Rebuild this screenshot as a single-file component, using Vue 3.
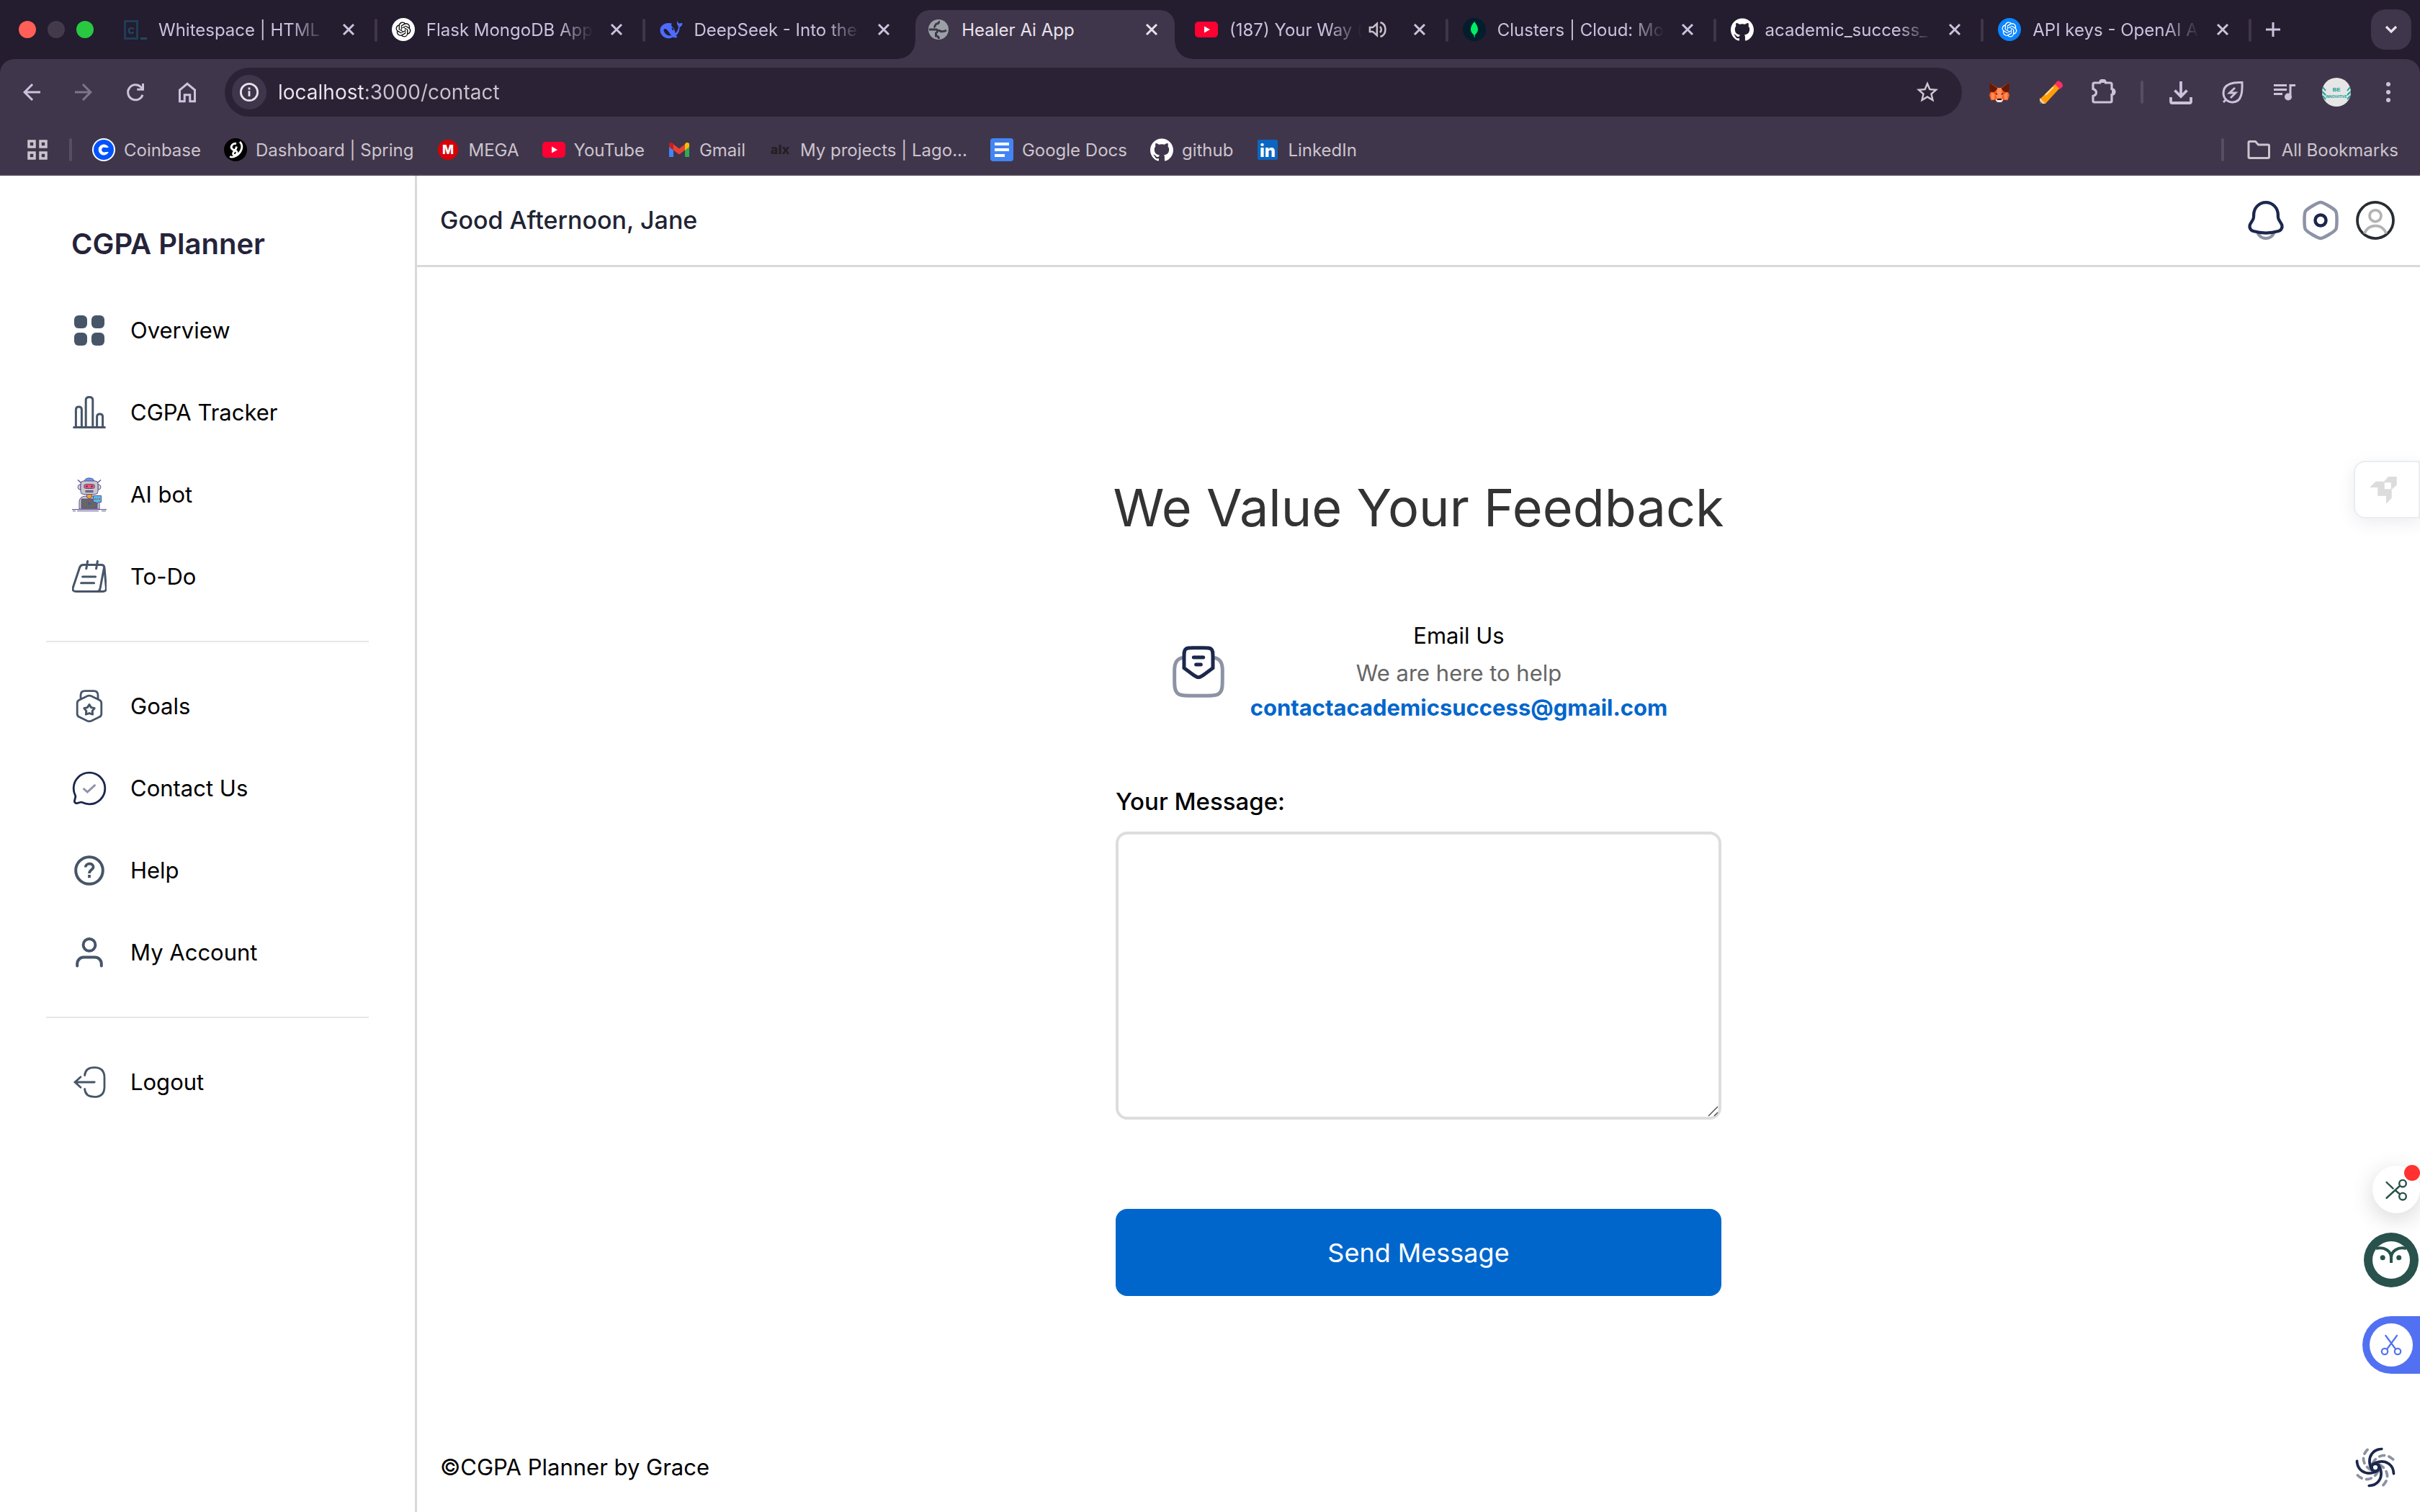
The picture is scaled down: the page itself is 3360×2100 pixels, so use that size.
<script setup>
import { ref } from 'vue'

const address = ref('localhost:3000/contact')
const message = ref('')

const knot = 'M22.2819 9.8211a5.9847 5.9847 0 0 0-.5157-4.9108 6.0462 6.0462 0 0 0-6.5098-2.9A6.0651 6.0651 0 0 0 4.9807 4.1818a5.9847 5.9847 0 0 0-3.9977 2.9 6.0462 6.0462 0 0 0 .7427 7.0966 5.98 5.98 0 0 0 .511 4.9107 6.051 6.051 0 0 0 6.5146 2.9001A5.9847 5.9847 0 0 0 13.2599 24a6.0557 6.0557 0 0 0 5.7718-4.2058 5.9894 5.9894 0 0 0 3.9977-2.9001 6.0557 6.0557 0 0 0-.7475-7.0729zm-9.022 12.6081a4.4755 4.4755 0 0 1-2.8764-1.0408l.1419-.0804 4.7783-2.7582a.7948.7948 0 0 0 .3927-.6813v-6.7369l2.02 1.1686a.071.071 0 0 1 .038.052v5.5826a4.504 4.504 0 0 1-4.4945 4.4944zm-9.6607-4.1254a4.4708 4.4708 0 0 1-.5346-3.0137l.142.0852 4.783 2.7582a.7712.7712 0 0 0 .7806 0l5.8428-3.3685v2.3324a.0804.0804 0 0 1-.0332.0615L9.74 19.9502a4.4992 4.4992 0 0 1-6.1408-1.6464zM2.3408 7.8956a4.485 4.485 0 0 1 2.3655-1.9728V11.6a.7664.7664 0 0 0 .3879.6765l5.8144 3.3543-2.0201 1.1685a.0757.0757 0 0 1-.071 0l-4.8303-2.7865A4.504 4.504 0 0 1 2.3408 7.872zm16.5963 3.8558L13.1038 8.364 15.1192 7.2a.0757.0757 0 0 1 .071 0l4.8303 2.7913a4.4944 4.4944 0 0 1-.6765 8.1042v-5.6772a.79.79 0 0 0-.407-.667zm2.0107-3.0231l-.142-.0852-4.7735-2.7818a.7759.7759 0 0 0-.7854 0L9.409 9.2297V6.8974a.0662.0662 0 0 1 .0284-.0615l4.8303-2.7866a4.4992 4.4992 0 0 1 6.6802 4.66zM8.3065 12.863l-2.02-1.1638a.0804.0804 0 0 1-.038-.0567V6.0742a4.4992 4.4992 0 0 1 7.3757-3.4537l-.142.0805L8.704 5.459a.7948.7948 0 0 0-.3927.6813zm1.0976-2.3654l2.602-1.4998 2.6069 1.4998v2.9994l-2.5974 1.4997-2.6067-1.4997Z'
const octocat = '<path fill="#fff" d="M12 .297c-6.63 0-12 5.373-12 12 0 5.303 3.438 9.8 8.205 11.385.6.113.82-.258.82-.577 0-.285-.01-1.04-.015-2.04-3.338.724-4.042-1.61-4.042-1.61C4.422 18.07 3.633 17.7 3.633 17.7c-1.087-.744.084-.729.084-.729 1.205.084 1.838 1.236 1.838 1.236 1.07 1.835 2.809 1.305 3.495.998.108-.776.417-1.305.76-1.605-2.665-.3-5.466-1.332-5.466-5.93 0-1.31.465-2.38 1.235-3.22-.135-.303-.54-1.523.105-3.176 0 0 1.005-.322 3.3 1.23.96-.267 1.98-.399 3-.405 1.02.006 2.04.138 3 .405 2.28-1.552 3.285-1.23 3.285-1.23.645 1.653.24 2.873.12 3.176.765.84 1.23 1.91 1.23 3.22 0 4.61-2.805 5.625-5.475 5.92.42.36.81 1.096.81 2.22 0 1.606-.015 2.896-.015 3.286 0 .315.21.69.825.57C20.565 22.092 24 17.592 24 12.297c0-6.627-5.373-12-12-12"/>'
const youtube = '<rect y="5" width="32" height="22" rx="5" fill="#ff0033"/><path d="M13 11.500l8 4.500-8 4.500z" fill="#fff"/>'

// Each entry is [viewBox size, inner markup].
const icons = {
  code: [32, '<rect x="1.500" y="4.500" width="17" height="24" fill="none" stroke="#1f3d56" stroke-width="3"/><text x="10" y="21.500" text-anchor="middle" font-family="Liberation Mono, monospace" font-weight="700" font-size="17" fill="#1f4a63">c</text><path d="M23 28.500h9" stroke="#1f4a63" stroke-width="3"/>'],
  gpt: [32, `<circle cx="16" cy="16" r="16" fill="#fff"/><path transform="translate(5.500 5.500) scale(.875)" d="${knot}" fill="#111"/>`],
  openai: [32, `<circle cx="16" cy="16" r="16" fill="#0a84ff"/><path transform="translate(5.500 5.500) scale(.875)" d="${knot}" fill="#fff"/>`],
  deepseek: [32, '<path fill="#4d6bfe" d="M31.500 7.200c-2.200-.7-3.400.6-4.800.2-1.100-.4-1.500-1.600-2.100-3.400-.9 2-1 4.200.3 5.900.9 1.200 1.100 2.200.9 3.700-.5 3.500-2.200 6.300-4 7.400-.6-3.900-2.600-7.300-5.200-9.700-1.200-1.100-.6-2.800 1-3.300-4.800-1.800-11.700-1-15.300 3.600C-.9 15.700.3 22.400 5.200 26c4.600 3.300 10 2.600 13 .5 1.800 1.100 4.500 1.200 6.600 0-1-.6-1.800-1-2.100-1.900 3.500-3.100 5.100-7.400 4.900-12 2.400-.6 3.900-2.500 3.900-5.400zM16.200 24.200c-4.600 1-9-1.500-10.700-6.700-.3-1 .4-2.700 2-2.500 3 .4 5.300 5.300 8.700 9.200zM17 13.200c1.700.6 2.200 2.400 1.800 4.200-1.300-.4-2.700-2.200-1.800-4.200z"/>'],
  globe: [32, '<circle cx="16" cy="16" r="14" fill="#9aa0a6"/><path d="M16 4.500c1.500 2-.5 3.500-2.500 3.500s-1.500 4-4 5M3 16h10c3 1 1.500 4-.5 5v4c2 0 4 1 4 4M17 16c0 4 7 3 10 1" fill="none" stroke="#40364b" stroke-width="3"/>'],
  youtube: [32, youtube],
  mongo: [32, '<circle cx="16" cy="16" r="16" fill="#001e2b"/><path d="M16 5c-3 4-5 6.500-5 10.500S13.500 22 15.400 23.500l.3 3.500h.8l.3-3.500C18.500 22 21 19.500 21 15.500S18.500 8.500 16 5z" fill="#00ed64"/>'],
  github: [24, octocat],
  close: [24, '<path d="M5 5l14 14M19 5L5 19" stroke="currentColor" stroke-width="3" fill="none"/>'],
  sound: [24, '<path d="M2.500 9.500h3.500l5-4.500v14l-5-4.500H2.500z" fill="none" stroke="currentColor" stroke-width="2.200"/><path d="M14.500 8.500a4.500 4.500 0 0 1 0 7M15 3.500c8 2.500 8 14.500 0 17" fill="none" stroke="currentColor" stroke-width="2.200"/>'],
  plus: [24, '<path d="M12 2v20M2 12h20" stroke="currentColor" stroke-width="3"/>'],
  chevron: [24, '<path d="M5 8l7 7 7-7" fill="none" stroke="currentColor" stroke-width="3.200"/>'],
  back: [24, '<path fill="currentColor" d="M20 11H7.830l5.590-5.590L12 4l-8 8 8 8 1.410-1.410L7.830 13H20v-2z"/>'],
  forward: [24, '<path fill="currentColor" d="M4 11h12.170l-5.590-5.590L12 4l8 8-8 8-1.410-1.410L16.170 13H4v-2z"/>'],
  reload: [24, '<path d="M18.700 14.500A7 7 0 1 1 17 7.200l2 2M19 4v5.500h-5.500" fill="none" stroke="currentColor" stroke-width="2"/>'],
  home: [24, '<path d="M5 10v10.500h4.500v-6h5v6H19V10l-7-5.800z" fill="none" stroke="currentColor" stroke-width="2"/>'],
  info: [24, '<circle cx="12" cy="12" r="10" fill="none" stroke="currentColor" stroke-width="2.400"/><path d="M12 10.500V17M12 6.500v2.400" stroke="currentColor" stroke-width="2.400"/>'],
  star: [24, '<path fill="currentColor" d="M22 9.240l-7.190-.62L12 2 9.190 8.630 2 9.240l5.460 4.730L5.820 21 12 17.270 18.180 21l-1.630-7.030L22 9.240zM12 15.400l-3.760 2.270 1-4.280-3.320-2.880 4.380-.38L12 6.100l1.710 4.040 4.380.38-3.320 2.880 1 4.280L12 15.400z"/>'],
  fox: [32, '<path d="M1 1l12 8h6L31 1l-1 14 2 6-3 8-6-1-3 4h-8l-3-4-6 1-3-8 2-6z" fill="#ff5c16"/><path d="M1 1l12 9-4 5-7 2C0 10 0 5 1 1zM31 1l-12 9 4 5 7 2c2-6 2-11 1-16z" fill="#661800"/><path d="M13 9h6l2 12-2 6h-6l-2-6z" fill="#ff8d5d"/><path d="M3 15l6 5-1 8-5-1zM29 15l-6 5 1 8 5-1z" fill="#ff8d5d"/><path d="M10 28l3-2h6l3 2-3 4h-6z" fill="#e7ebf6"/><path d="M13 26h6l1 2.500h-8zM9 17l4 1.500-.5 2zM23 17l-4 1.500.5 2z" fill="#331000"/>'],
  pencil: [32, '<path d="M0 26L22 4l6 6L8 32z" fill="#ff9d0a"/><path d="M21 5l3-4c3-2 9 3 8 7l-4 4z" fill="#ff2e63"/><path d="M8 20L19 9" stroke="#ffe0a8" stroke-width="1.800"/><path d="M0 24l8 8H0z" fill="#ffd0a0"/><path d="M0 28l4 4H0z" fill="#5d5d66"/>'],
  puzzle: [36, '<path d="M6 5h7.500a4 4 0 0 1 8 0H28q2 0 2 2v6.500a4 4 0 0 1 0 8V30q0 2-2 2H6q-2 0-2-2v-6.500c6-2 6-8 0-10V7q0-2 2-2z" fill="none" stroke="currentColor" stroke-width="3.200"/><path d="M13 5a4.500 4.500 0 0 1 9 0zM30 13.500a4.500 4.500 0 0 1 0 9z" fill="currentColor"/>'],
  download: [36, '<path d="M18 3v22M9.500 15.500L18 24l8.500-8.500M4 25v6q0 2 2 2h24q2 0 2-2v-6" fill="none" stroke="currentColor" stroke-width="3.800"/>'],
  leaf: [36, '<path d="M31 4.500C20 4 5 6 5 19c0 8 6 13 13 13 13 0 13.500-16 13-27.500zM9.500 27.500L5 32" fill="none" stroke="currentColor" stroke-width="3"/><path d="M21 12l-7.500 7h8.500L15 26" fill="none" stroke="currentColor" stroke-width="2.800"/>'],
  music: [36, '<path d="M3 8.500h18M3 14.500h18M3 20.500h12M26 22V8.500h7" fill="none" stroke="currentColor" stroke-width="3"/><circle cx="23" cy="24.500" r="5" fill="currentColor"/>'],
  avatar: [40, '<circle cx="20" cy="20" r="20" fill="#e6e6e6"/><g fill="#18a095" font-family="Liberation Sans Narrow, Liberation Sans, sans-serif" font-weight="700" font-size="8" text-anchor="middle"><text x="20" y="19">BE</text><text x="20" y="28" font-size="5">INNOVATIVE</text></g><path d="M1 13l4 5M0 19l5 5M1 25l4 5M39 13l-4 5M40 19l-5 5M39 25l-4 5" stroke="#18a095" stroke-width="2"/>'],
  kebab: [36, '<g fill="currentColor"><circle cx="18" cy="7" r="3"/><circle cx="18" cy="18" r="3"/><circle cx="18" cy="29" r="3"/></g>'],
  grid: [28, '<path d="M2 2h8v8H2zM18 2h8v8h-8zM2 18h8v8H2zM18 18h8v8h-8z" fill="none" stroke="currentColor" stroke-width="3.500"/>'],
  coinbase: [32, '<circle cx="16" cy="16" r="16" fill="#fff"/><circle cx="16" cy="16" r="14" fill="#0052ff"/><path d="M23 13a7.500 7.500 0 1 0 0 6h-4.500a3.500 3.500 0 1 1 0-6z" fill="#fff"/>'],
  spring: [32, '<circle cx="16" cy="16" r="16" fill="#000"/><path d="M22 5c5 5 3 12-2 17-3 3-8 5-12 3.500M17 7.500c-6-1-9 5.500-5 8s6.500 1.500 6 5-5.500 4-5.500 1 4.500-5 5-10" fill="none" stroke="#fff" stroke-width="2.800"/>'],
  mega: [32, '<circle cx="16" cy="16" r="14" fill="#d90007"/><text x="16" y="22" text-anchor="middle" font-family="Inter, sans-serif" font-weight="800" font-size="17" fill="#fff">M</text>'],
  gmail: [32, '<path d="M2 8v18h6V13z" fill="#4285f4"/><path d="M30 8v18h-6V13z" fill="#34a853"/><path d="M24 8l6-1v5l-6 4.500z" fill="#fbbc04"/><path d="M2 7l6 1v8.500L2 12z" fill="#c5221f"/><path d="M5 6l11 8.500L27 6l-3 10.500-8 6-8-6z" fill="#ea4335"/><path d="M24 8c2-3 6-2.500 6 1v3l-6 4.500z" fill="#fbbc04"/><path d="M8 8C6 5 2 5.500 2 9v3l6 4.500z" fill="#c5221f"/>'],
  alx: [32, '<text x="16" y="22" text-anchor="middle" font-family="Inter, sans-serif" font-weight="800" font-size="18" fill="#231f24">alx</text>'],
  docs: [32, '<rect width="32" height="32" rx="4" fill="#4285f4"/><path d="M6 8h20M6 16h20M6 24h14" stroke="#fff" stroke-width="4"/>'],
  linkedin: [32, '<rect x="2" y="2" width="28" height="28" rx="2" fill="#0a66c2"/><text x="16" y="26" text-anchor="middle" font-family="Inter, sans-serif" font-weight="800" font-size="24" fill="#fff">in</text>'],
  folder: [32, '<path d="M3.500 4.500h8l4 4.500H29q1.500 0 1.500 1.500V26q0 1.500-1.500 1.500H3.500Q2 27.500 2 26V6q0-1.500 1.500-1.500z" fill="none" stroke="currentColor" stroke-width="3"/>'],

  overview: [48, '<g fill="#475569"><rect x="3" y="3" width="18" height="18" rx="6"/><rect x="27" y="3" width="18" height="18" rx="6"/><rect x="3" y="27" width="18" height="18" rx="6"/><rect x="27" y="27" width="18" height="18" rx="6"/></g>'],
  chart: [24, '<path d="M1.300 22.300h21.400M2.700 22V10q0-2 2-2t2 2v12M9.600 22V3.300q0-2 2.400-2t2.400 2V22M17.300 22v-7q0-2 2-2t2 2v7" fill="none" stroke="#475569" stroke-width="1.500" stroke-linecap="round"/>'],
  robot: [48, '<g stroke="#5a4f8c" stroke-width="1"><path d="M10 44V34q0-7 8-8h12q8 1 8 8v10z" fill="#c9c9cf"/><path d="M12.500 7.500L8 3.500M35.500 7.500L40 3.500" fill="none" stroke-width="1.400"/><path d="M17 5.500q1-4.500 7-4.500t7 4.500z" fill="#5b9df0"/><path d="M12 9.500q-4 1-4 4t4 4zM36 9.500q4 1 4 4t-4 4z" fill="#d9d9de"/><rect x="12" y="5" width="24" height="18.500" rx="4" fill="#c8c8cc"/><rect x="16.500" y="9.500" width="15" height="6" rx="3" fill="#f4566e"/><rect x="19" y="18.500" width="10" height="2" fill="#777"/><path d="M20.500 23.500h7v4L24 30l-3.500-2.500z" fill="#f7a11a"/><path d="M13 43V30h22v13z" fill="#666"/><path d="M29.500 25.500h11v9h-4L35 37l-1.500-2.500h-4z" fill="#55bdf0"/><path d="M0 44.500h48M1 46.700h4M7 46.700h30M41 46.700h6" fill="none"/></g><circle cx="20.500" cy="12.500" r="1.200" fill="#3b2a7a"/><circle cx="27.500" cy="12.500" r="1.200" fill="#3b2a7a"/><circle cx="24" cy="36.500" r="1.800" fill="#5a4f8c"/><path d="M31 30h2M34 30h2M37 30h2" stroke="#a0522d" stroke-width="1.600"/>'],
  todo: [24, '<path d="M7.800 3.700h12.400q2.200 0 2.300 2.200l1.200 13.900q.2 2.500-2.300 2.500H3q-3.100 0-2.300-2.900L5.300 5.600q.6-1.900 2.500-1.900zM22.300 5.500l-2.700 14.200q-.4 2.600-2.600 2.600M10.800 1.200l-.9 5.200M17.700 1.200l-.9 5.200M7.300 12h9M6.300 16.400h9" fill="none" stroke="#475569" stroke-width="1.500" stroke-linecap="round"/>'],
  goals: [24, '<path d="M6 7.200V4.300q0-3 3-3h6q3 0 3 3v2.900M10.600 4.900q1.400-.6 2.800 0l5.600 2.700q1.400.7 1.400 2.200v7.400q0 1.500-1.400 2.200l-5.600 2.700q-1.400.6-2.800 0L5 19.400q-1.400-.7-1.400-2.200V9.800q0-1.500 1.400-2.200z" fill="none" stroke="#475569" stroke-width="1.400"/><path d="M12 10.800l1.300 2 2.300.5-1.500 1.900.2 2.400-2.300-.8-2.300.8.200-2.400-1.500-1.900 2.300-.5z" fill="none" stroke="#475569" stroke-width="1.500" stroke-linejoin="round"/>'],
  contact: [22, '<g transform="translate(-1 -1)" fill="none" stroke="#1c274c" stroke-width="1.300"><path d="M12 22C17.523 22 22 17.523 22 12C22 6.477 17.523 2 12 2C6.477 2 2 6.477 2 12C2 13.600 2.376 15.112 3.043 16.453C3.221 16.809 3.280 17.216 3.177 17.601L2.582 19.827C2.323 20.793 3.207 21.677 4.173 21.419L6.399 20.823C6.784 20.720 7.191 20.779 7.548 20.957C8.888 21.624 10.400 22 12 22Z"/><path opacity=".5" d="M8.500 12.300l2.300 2 4.700-4.300" stroke-linecap="round"/></g>'],
  help: [24, '<circle cx="12" cy="12" r="9.400" fill="none" stroke="#475569" stroke-width="2"/><path d="M9.400 9.800c0-3.200 5.400-3.300 5.400-.2 0 2-2.800 1.900-2.800 4.400M12 15v2.100" fill="none" stroke="#475569" stroke-width="1.900"/>'],
  account: [24, '<circle cx="12" cy="6.700" r="4.200" fill="none" stroke="#475569" stroke-width="2"/><path d="M3.600 21.300v-1.500a4.500 4.500 0 0 1 4.500-4.500h7.800a4.500 4.500 0 0 1 4.500 4.500v1.500" fill="none" stroke="#475569" stroke-width="2" stroke-linecap="round"/>'],
  logout: [24, '<path d="M15.600 12H2M6 8.400L2 12l4 3.600M8.800 7.300q.4-5.500 6.700-5.500 7 0 7 7v6.400q0 7-7 7-6.300 0-6.700-5.500" fill="none" stroke="#475569" stroke-width="1.400" stroke-linecap="round"/>'],

  bell: [24, '<g fill="none" stroke="#1c274c" stroke-width="1.700"><path opacity=".5" d="M7.500 19C8.155 20.748 9.922 22 12 22C14.078 22 15.845 20.748 16.500 19"/><path d="M18.749 9.710V9.005C18.749 5.136 15.727 2 12 2C8.273 2 5.251 5.136 5.251 9.005V9.710C5.251 10.555 5.010 11.382 4.558 12.085L3.450 13.810C2.439 15.384 3.211 17.525 4.970 18.023C9.573 19.326 14.427 19.326 19.030 18.023C20.789 17.525 21.561 15.384 20.550 13.810L19.442 12.085C18.990 11.382 18.749 10.555 18.749 9.710Z"/></g>'],
  settings: [24, '<g fill="none" stroke="#1c274c" stroke-width="1.800"><circle cx="12" cy="12" r="3"/><path opacity=".5" d="M7.843 3.802C9.872 2.601 10.886 2 12 2C13.114 2 14.128 2.601 16.157 3.802L16.843 4.208C18.872 5.410 19.886 6.011 20.443 7C21 7.989 21 9.191 21 11.594V12.406C21 14.809 21 16.011 20.443 17C19.886 17.989 18.872 18.590 16.843 19.792L16.157 20.198C14.128 21.399 13.114 22 12 22C10.886 22 9.872 21.399 7.843 20.198L7.157 19.792C5.128 18.590 4.114 17.989 3.557 17C3 16.011 3 14.809 3 12.406V11.594C3 9.191 3 7.989 3.557 7C4.114 6.011 5.128 5.410 7.157 4.208L7.843 3.802Z"/></g>'],
  user: [24, '<circle cx="12" cy="12" r="10" fill="none" stroke="#292d32" stroke-width="1.500"/><g fill="none" stroke="#b4b4b4" stroke-width="1.500"><circle cx="12" cy="9.500" r="3.200"/><path d="M6 19.400C6.800 16.700 9.200 15 12 15s5.200 1.700 6 4.400"/></g>'],
  letter: [24, '<g fill="none" stroke="#1c274c" stroke-width="1.500"><path opacity=".5" d="M5.800 6.100C3.200 6.400 2 8 2 11.500V14c0 3.770 0 5.660 1.170 6.830S6.200 22 10 22h4c3.770 0 5.660 0 6.830-1.170S22 17.770 22 14v-2.500c0-3.500-1.200-5.100-3.800-5.400"/><path d="M6 10.400V6c0-1.900 0-2.800.6-3.400S8.100 2 10 2h4c1.900 0 2.800 0 3.400.6S18 4.100 18 6v4.400l-3.600 2.700c-1.200.8-1.700 1.200-2.400 1.200s-1.200-.4-2.400-1.200z"/><path d="M10 6h4M11 9h2" stroke-linecap="round"/></g>'],
  swirl: [24, '<defs><path id="arm" d="M15.500 1.800C10.500 2 8 6 9 10.500Q9.400 12.300 10.300 13.500" fill="none" stroke="#1c274c" stroke-width="1.500" stroke-linecap="round"/></defs><g opacity=".5" stroke-dasharray="2.800 2.600"><use href="#arm" transform="rotate(-43 12 12)"/><use href="#arm" transform="rotate(47 12 12)"/><use href="#arm" transform="rotate(137 12 12)"/><use href="#arm" transform="rotate(227 12 12)"/></g><use href="#arm"/><use href="#arm" transform="rotate(90 12 12)"/><use href="#arm" transform="rotate(180 12 12)"/><use href="#arm" transform="rotate(270 12 12)"/><circle cx="12" cy="12" r="2" fill="#fff" stroke="#1c274c" stroke-width="1.500"/>'],

  rocket: [80, '<path d="M20.300 37l8-8.300H40l6-6.700h11.700v11.700l-7 6v12l-7.700 8V48.700H31.300V37z" fill="#dcdcdc"/><path d="M40.700 30.300h9v9h-9z" fill="#fff"/>'],
  clip: [66, '<g fill="none" stroke="#28524b" stroke-width="2.400" stroke-linecap="round"><circle cx="42" cy="24.700" r="4.800"/><circle cx="42" cy="42.700" r="4.800"/><path d="M19.500 45L38 28M19.500 23l9 8.700M31.500 34l6.500 5.500"/></g>'],
  owl: [76, '<circle cx="38" cy="38" r="38" fill="#28524b"/><circle cx="38" cy="38" r="26" fill="#fff"/><path d="M17 22c12-3 21 4 21 13v7M59 22c-12-3-21 4-21 13" fill="none" stroke="#28524b" stroke-width="4"/><circle cx="26.200" cy="34.700" r="3.500" fill="#28524b"/><circle cx="48.700" cy="34.700" r="3.500" fill="#28524b"/>'],
  scissors: [60, '<circle cx="30" cy="30" r="30" fill="#fff"/><g fill="none" stroke="#5271f2" stroke-width="2.200" stroke-linecap="round"><circle cx="21" cy="39" r="4.200"/><circle cx="39" cy="39" r="4.200"/><path d="M22.300 17L36 35.500M38 17L24.300 35.500"/></g>'],
}
const vb = (name) => `0 0 ${icons[name][0]} ${icons[name][0]}`
const art = (name) => icons[name][1]

const tabs = [
  { icon: 'code', title: 'Whitespace | HTML', line: true },
  { icon: 'gpt', title: 'Flask MongoDB App', line: true },
  { icon: 'deepseek', title: 'DeepSeek - Into the' },
  { icon: 'globe', title: 'Healer Ai App', active: true },
  { icon: 'youtube', title: '(187) Your Way (', sound: true, line: true },
  { icon: 'mongo', title: 'Clusters | Cloud: Mo', line: true },
  { icon: 'github', title: 'academic_success_', line: true },
  { icon: 'openai', title: 'API keys - OpenAI A', line: true },
]
const bookmarks = [
  ['coinbase', 'Coinbase'], ['spring', 'Dashboard | Spring'], ['mega', 'MEGA'],
  ['youtube', 'YouTube'], ['gmail', 'Gmail'], ['alx', 'My projects | Lago...'],
  ['docs', 'Google Docs'], ['github', 'github'], ['linkedin', 'LinkedIn'],
]
const navGroups = [
  [['overview', 'Overview'], ['chart', 'CGPA Tracker'], ['robot', 'AI bot'], ['todo', 'To-Do']],
  [['goals', 'Goals'], ['contact', 'Contact Us'], ['help', 'Help'], ['account', 'My Account']],
  [['logout', 'Logout']],
]
</script>

<template>
  <div class="window">
    <header class="browser">
      <div class="strip">
        <div class="lights"><i class="red"></i><i class="dim"></i><i class="green"></i></div>
        <div class="tabs">
          <div v-for="t in tabs" :key="t.title" class="tab" :class="{ active: t.active, line: t.line }">
            <svg class="i32" :viewBox="vb(t.icon)" v-html="art(t.icon)"></svg>
            <span class="tab-title">{{ t.title }}</span>
            <svg v-if="t.sound" class="i28 sound" :viewBox="vb('sound')" v-html="art('sound')"></svg>
            <button class="close" aria-label="Close tab"><svg class="i24" :viewBox="vb('close')" v-html="art('close')"></svg></button>
          </div>
        </div>
        <button class="new-tab" aria-label="New tab"><svg class="i24" :viewBox="vb('plus')" v-html="art('plus')"></svg></button>
        <button class="tab-search" aria-label="Search tabs"><svg class="i24" :viewBox="vb('chevron')" v-html="art('chevron')"></svg></button>
      </div>

      <div class="toolbar">
        <div class="tools">
          <button v-for="n in ['back', 'forward', 'reload', 'home']" :key="n" class="tool" :class="n" :aria-label="n">
            <svg class="i36" :viewBox="vb(n)" v-html="art(n)"></svg>
          </button>
        </div>
        <div class="address">
          <span class="site-info"><svg class="i28" :viewBox="vb('info')" v-html="art('info')"></svg></span>
          <input v-model="address" class="url" type="text" aria-label="Address" />
          <button class="bookmark-star" aria-label="Bookmark"><svg class="i36" :viewBox="vb('star')" v-html="art('star')"></svg></button>
        </div>
        <div class="tools">
          <button class="tool" aria-label="Wallet"><svg class="i28" :viewBox="vb('fox')" v-html="art('fox')"></svg></button>
          <button class="tool" aria-label="Pencil"><svg class="i32" :viewBox="vb('pencil')" v-html="art('pencil')"></svg></button>
          <button class="tool" aria-label="Extensions"><svg class="i36" :viewBox="vb('puzzle')" v-html="art('puzzle')"></svg></button>
          <i class="rule"></i>
          <button v-for="n in ['download', 'leaf', 'music']" :key="n" class="tool" :aria-label="n">
            <svg class="i36" :viewBox="vb(n)" v-html="art(n)"></svg>
          </button>
          <button class="tool" aria-label="Profile"><svg class="i40" :viewBox="vb('avatar')" v-html="art('avatar')"></svg></button>
          <button class="tool" aria-label="Menu"><svg class="i36" :viewBox="vb('kebab')" v-html="art('kebab')"></svg></button>
        </div>
      </div>

      <nav class="bookmarks" aria-label="Bookmarks">
        <svg class="i28" :viewBox="vb('grid')" v-html="art('grid')"></svg>
        <i class="rule"></i>
        <div class="bookmark-list">
          <a v-for="[icon, name] in bookmarks" :key="name" href="#">
            <svg class="i32" :viewBox="vb(icon)" v-html="art(icon)"></svg>{{ name }}
          </a>
        </div>
        <i class="rule"></i>
        <a class="all" href="#"><svg class="i32" :viewBox="vb('folder')" v-html="art('folder')"></svg>All Bookmarks</a>
      </nav>
    </header>

    <div class="page">
      <aside class="sidebar">
        <h2 class="brand">CGPA Planner</h2>
        <nav>
          <ul v-for="(group, g) in navGroups" :key="g">
            <li v-for="[icon, label] in group" :key="label">
              <a href="#"><svg class="i48" :viewBox="vb(icon)" v-html="art(icon)"></svg>{{ label }}</a>
            </li>
          </ul>
        </nav>
      </aside>

      <div class="content">
        <header class="topbar">
          <p class="greeting">Good Afternoon, Jane</p>
          <div class="topbar-icons">
            <button v-for="n in ['bell', 'settings', 'user']" :key="n" :aria-label="n">
              <svg class="i60" :viewBox="vb(n)" v-html="art(n)"></svg>
            </button>
          </div>
        </header>

        <main class="contact">
          <h1>We Value Your Feedback</h1>
          <div class="email">
            <svg class="i80" :viewBox="vb('letter')" v-html="art('letter')"></svg>
            <div class="email-text">
              <p class="email-title">Email Us</p>
              <p class="email-note">We are here to help</p>
              <a href="mailto:contactacademicsuccess@gmail.com">contactacademicsuccess@gmail.com</a>
            </div>
          </div>
          <form @submit.prevent>
            <label for="message">Your Message:</label>
            <textarea id="message" v-model="message"></textarea>
            <button type="submit">Send Message</button>
          </form>
        </main>

        <footer class="foot">
          <p>©CGPA Planner by Grace</p>
          <svg class="i60" :viewBox="vb('swirl')" v-html="art('swirl')"></svg>
        </footer>
      </div>

      <button class="float rocket" aria-label="Launch"><svg class="i80" :viewBox="vb('rocket')" v-html="art('rocket')"></svg></button>
      <div class="float stack">
        <button class="clip" aria-label="Clip"><svg class="i66" :viewBox="vb('clip')" v-html="art('clip')"></svg><i class="dot"></i></button>
        <button class="owl" aria-label="Owl"><svg class="i76" :viewBox="vb('owl')" v-html="art('owl')"></svg></button>
        <button class="snip" aria-label="Snip"><svg class="i60" :viewBox="vb('scissors')" v-html="art('scissors')"></svg></button>
      </div>
    </div>
  </div>
</template>

<style>
body {
  margin: 0;
  background: #fff;
}
</style>

<style scoped>
* {
  box-sizing: border-box;
}
.window {
  display: flex;
  flex-direction: column;
  min-height: 100vh;
  font-family: Inter, "Liberation Sans", sans-serif;
  color: #000;
}
button {
  padding: 0;
  border: 0;
  background: none;
  color: inherit;
  font: inherit;
}
p,
h1,
h2,
ul {
  margin: 0;
  padding: 0;
}
a {
  color: inherit;
  text-decoration: none;
}
svg {
  display: block;
  flex: none;
}
.i24 { width: 24px; height: 24px; }
.i28 { width: 28px; height: 28px; }
.i32 { width: 32px; height: 32px; }
.i36 { width: 36px; height: 36px; }
.i40 { width: 40px; height: 40px; }
.i48 { width: 48px; height: 48px; }
.i60 { width: 60px; height: 60px; }
.i66 { width: 66px; height: 66px; }
.i76 { width: 76px; height: 76px; }
.i80 { width: 80px; height: 80px; }

/* Browser chrome */
.browser {
  background: #241c2f;
  color: #cbc2db;
  font-size: 24px;
}
.strip {
  display: flex;
  align-items: center;
  height: 82px;
  padding: 0 12px 0 26px;
}
.lights {
  display: flex;
  gap: 16px;
  width: 124px;
}
.lights i {
  width: 24px;
  height: 24px;
  border-radius: 50%;
}
.red { background: #ff5f57; }
.dim { background: #433a4c; }
.green { background: #28c840; }
.tabs {
  display: flex;
  flex: 1;
  align-self: stretch;
}
.tab {
  position: relative;
  display: flex;
  flex: 1 1 0;
  align-items: center;
  min-width: 0;
  padding: 0 22px;
}
.tab.line::after {
  content: "";
  position: absolute;
  right: -2px;
  top: 26px;
  width: 4px;
  height: 32px;
  border-radius: 2px;
  background: #40364b;
}
.tab-title {
  flex: 1;
  margin: 0 20px 0 16px;
  overflow: hidden;
  white-space: nowrap;
  mask-image: linear-gradient(to right, #000 calc(100% - 48px), transparent);
}
.tab.active {
  margin: 14px 6px 0;
  padding: 0 16px 14px;
  border-radius: 20px 20px 0 0;
  background: #40364b;
  color: #e9e2ec;
}
.tab.active::before,
.tab.active::after {
  content: "";
  position: absolute;
  bottom: 0;
  width: 24px;
  height: 24px;
}
.tab.active::before {
  left: -24px;
  background: radial-gradient(circle at 0 0, transparent 23px, #40364b 24px);
}
.tab.active::after {
  right: -24px;
  background: radial-gradient(circle at 100% 0, transparent 23px, #40364b 24px);
}
.tab.active .tab-title {
  mask-image: none;
}
.sound {
  margin: 0 32px 0 -12px;
  color: #c8c1ca;
}
.close {
  margin-right: 4px;
}
.new-tab {
  margin: 0 124px 0 20px;
}
.tab-search {
  display: grid;
  place-items: center;
  width: 56px;
  height: 56px;
  border-radius: 20px;
  background: #40364b;
  color: #e9e2ec;
}
.toolbar {
  display: flex;
  align-items: center;
  gap: 16px;
  height: 92px;
  padding: 0 8px;
  border-radius: 20px 20px 0 0;
  background: #40364b;
}
.tools {
  display: flex;
  align-items: center;
}
.tool {
  display: grid;
  place-items: center;
  width: 72px;
  height: 72px;
}
.forward {
  color: #7f7589;
}
.rule {
  width: 4px;
  height: 32px;
  border-radius: 2px;
  background: #584e63;
}
.tools .rule {
  margin: 0 16px;
}
.address {
  display: flex;
  flex: 1;
  align-items: center;
  height: 68px;
  padding: 0 30px 0 10px;
  border-radius: 34px;
  background: #2b2335;
  color: #cfc8d2;
}
.site-info {
  display: grid;
  place-items: center;
  width: 48px;
  height: 48px;
  border-radius: 50%;
  background: #40364b;
  color: #e9e2ec;
}
.url {
  flex: 1;
  margin: 0 16px;
  padding: 0;
  border: 0;
  outline: 0;
  background: linear-gradient(to right, #ece6ef 122px, #cbc4ce 122px);
  background-clip: text;
  color: transparent;
  font: inherit;
  font-size: 28px;
}
.bookmarks {
  display: flex;
  align-items: center;
  height: 70px;
  padding: 0 30px 0 38px;
  border-bottom: 2px solid #4b4452;
  background: #40364b;
  color: #cbc4ce;
}
.bookmarks > .rule:first-of-type {
  margin: 0 28px 0 30px;
}
.bookmark-list {
  display: flex;
  flex: 1;
  gap: 32px;
}
.bookmarks a {
  display: flex;
  align-items: center;
  gap: 12px;
  white-space: nowrap;
}
.bookmarks .all {
  gap: 16px;
  margin-left: 32px;
}

/* Application */
.page {
  position: relative;
  display: flex;
  flex: 1;
  font-size: 31px;
  line-height: 48px;
}
.sidebar {
  flex: none;
  width: 579px;
  padding: 65px 64px;
  border-right: 3px solid #d9d9d9;
}
.brand {
  margin: 0 0 33px 35px;
  color: #25233a;
  font-size: 40px;
  font-weight: 600;
  line-height: 60px;
}
.sidebar ul {
  list-style: none;
}
.sidebar ul + ul {
  margin-top: 32px;
  padding-top: 32px;
  border-top: 2px solid #e5e7eb;
}
.sidebar li a {
  display: flex;
  align-items: center;
  gap: 33px;
  height: 114px;
  padding-left: 36px;
}
.content {
  display: flex;
  flex: 1;
  flex-direction: column;
  min-width: 0;
}
.topbar {
  display: flex;
  align-items: center;
  justify-content: space-between;
  height: 127px;
  padding: 0 32px;
  border-bottom: 3px solid #d9d9d9;
}
.greeting {
  color: #1f2433;
  font-size: 34px;
  font-weight: 500;
}
.topbar-icons {
  display: flex;
  gap: 16px;
}
.contact {
  display: flex;
  flex: 1;
  flex-direction: column;
  align-items: center;
  padding-top: 286px;
}
h1 {
  color: #333;
  font-size: 72px;
  font-weight: 400;
  line-height: 96px;
}
.email {
  display: flex;
  align-items: center;
  gap: 32px;
  margin-top: 106px;
  text-align: center;
}
.email-title {
  margin-bottom: 4px;
}
.email-note {
  color: #666;
}
.email a {
  display: block;
  color: #0066cc;
  font-weight: 700;
}
form {
  display: flex;
  flex-direction: column;
  width: 841px;
  margin-top: 82px;
}
label {
  margin-bottom: 18px;
  font-size: 33px;
  font-weight: 500;
}
textarea {
  height: 400px;
  padding: 24px;
  border: 4px solid #ddd;
  border-radius: 16px;
  outline: 0;
  background: #fff;
  font: inherit;
  resize: vertical;
}
textarea::-webkit-resizer {
  background: url("data:image/svg+xml,%3Csvg xmlns='http://www.w3.org/2000/svg' viewBox='0 0 15 15'%3E%3Cpath d='M1 14L14 1M9 14l5-5' stroke='%23555' stroke-width='1.500'/%3E%3C/svg%3E");
}
form button {
  height: 121px;
  margin-top: 124px;
  border-radius: 16px;
  background: #0066cc;
  color: #fff;
  font-size: 36px;
}
.foot {
  display: flex;
  align-items: center;
  justify-content: space-between;
  padding: 0 32px 32px;
}

/* Widgets pinned to the right edge, over the page */
.float {
  position: absolute;
  right: 0;
}
.rocket {
  top: 396px;
  width: 92px;
  height: 80px;
  border: 2px solid #e8edf3;
  border-radius: 16px 0 0 16px;
  background: #fff;
  box-shadow: 0 6px 24px rgba(0, 0, 0, 0.08);
}
.rocket svg {
  margin-top: -2px;
}
.stack {
  top: 1375px;
  display: flex;
  flex-direction: column;
  align-items: flex-end;
}
.clip {
  position: relative;
  border-radius: 50%;
  background: #fff;
  box-shadow: 0 8px 32px rgba(0, 0, 0, 0.16);
}
.dot {
  position: absolute;
  top: -1px;
  right: 0;
  width: 22px;
  height: 22px;
  border-radius: 50%;
  background: #ff3131;
}
.owl {
  margin: 27px 2px 40px 0;
}
.snip {
  padding: 10px;
  border-radius: 40px 0 0 40px;
  background: #5271f2;
}
</style>
